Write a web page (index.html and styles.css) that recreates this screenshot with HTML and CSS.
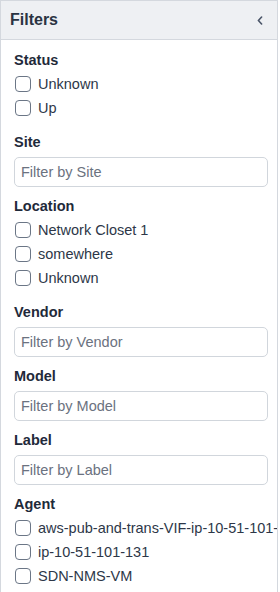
FILE: index.html
```html
<!DOCTYPE html>
<html>
<head>
<meta charset="utf-8">
<link rel="stylesheet" href="styles.css">
</head>
<body>
<aside class="panel">
  <div class="panel-head">
    <h2 class="panel-title">Filters</h2>
    <button class="collapse" aria-label="Collapse">
      <svg width="6" height="9" viewBox="0 0 6 9"><path d="M4.6 1 L1.4 4.5 L4.6 8" fill="none" stroke="#4a5568" stroke-width="1.6" stroke-linecap="round" stroke-linejoin="round"/></svg>
    </button>
  </div>
  <div class="panel-body">
    <section class="group">
      <h3 class="group-title">Status</h3>
      <div class="checks">
        <label class="check"><span class="box"></span>Unknown</label>
        <label class="check"><span class="box"></span>Up</label>
      </div>
    </section>
    <section class="group">
      <h3 class="group-title">Site</h3>
      <input class="field" placeholder="Filter by Site">
    </section>
    <section class="group">
      <h3 class="group-title">Location</h3>
      <div class="checks">
        <label class="check"><span class="box"></span>Network Closet 1</label>
        <label class="check"><span class="box"></span>somewhere</label>
        <label class="check"><span class="box"></span>Unknown</label>
      </div>
    </section>
    <section class="group">
      <h3 class="group-title">Vendor</h3>
      <input class="field" placeholder="Filter by Vendor">
    </section>
    <section class="group">
      <h3 class="group-title">Model</h3>
      <input class="field" placeholder="Filter by Model">
    </section>
    <section class="group">
      <h3 class="group-title">Label</h3>
      <input class="field" placeholder="Filter by Label">
    </section>
    <section class="group">
      <h3 class="group-title">Agent</h3>
      <div class="checks">
        <label class="check"><span class="box"></span>aws-pub-and-trans-VIF-ip-10-51-101-131</label>
        <label class="check"><span class="box"></span>ip-10-51-101-131</label>
        <label class="check"><span class="box"></span>SDN-NMS-VM</label>
      </div>
    </section>
  </div>
</aside>
</body>
</html>
```
FILE: styles.css
```css
* { box-sizing: border-box; }
html, body { margin: 0; padding: 0; background: #fff; }
body { font-family: "Liberation Sans", Arial, sans-serif; color: #2a3342; }

.panel {
  width: 278px;
  height: 592px;
  border: 1px solid #d4d8de;
  border-bottom: none;
  overflow: hidden;
}
.panel-head {
  height: 39px;
  background: #eef0f3;
  border-bottom: 1px solid #d4d8de;
  display: flex;
  align-items: center;
  justify-content: space-between;
  padding: 0 14px 0 9px;
}
.panel-title {
  margin: 0;
  font-size: 16px;
  font-weight: 700;
  color: #2a3342;
}
.collapse {
  border: none;
  background: none;
  padding: 0;
  display: flex;
  align-items: center;
  margin-top: 1px;
}
.panel-body {
  padding: 10px 10px 0 13px;
}
.group {
  display: flex;
  flex-direction: column;
  margin-bottom: 9px;
}
.group-title {
  margin: 0 0 2px 0;
  font-size: 14.5px;
  line-height: 20px;
  font-weight: 700;
  color: #1f2a3a;
}
.checks {
  padding-bottom: 3px;
}
.check {
  display: flex;
  align-items: center;
  gap: 7px;
  height: 24px;
  font-size: 14.5px;
  color: #2d3748;
  white-space: nowrap;
}
.box {
  flex: none;
  width: 16px;
  height: 16px;
  border: 1.5px solid #6b7686;
  border-radius: 4px;
  margin-left: 1px;
}
.field {
  display: block;
  width: 254px;
  height: 30px;
  margin-top: 3px;
  border: 1px solid #d1d6dc;
  border-radius: 5px;
  padding: 0 6px;
  font-family: "Liberation Sans", Arial, sans-serif;
  font-size: 14.5px;
  color: #2d3748;
  background: #fff;
  outline: none;
}
.field::placeholder { color: #6b7280; }
```
